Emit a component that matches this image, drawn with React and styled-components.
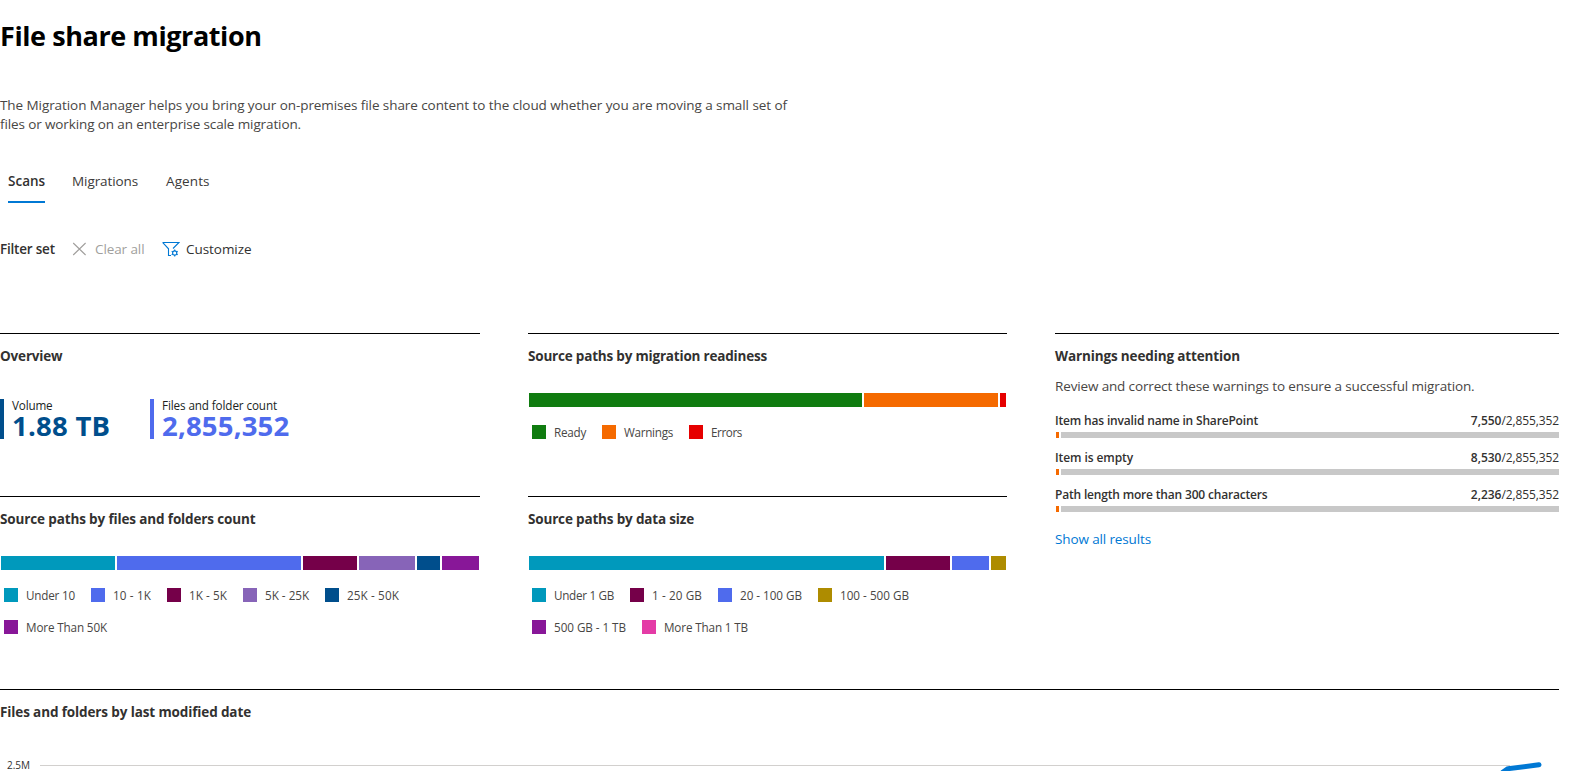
import React from "react";
import styled, { createGlobalStyle } from "styled-components";

const GlobalStyle = createGlobalStyle`
  * { box-sizing: border-box; }
  html, body { margin: 0; background: #fff; overflow: hidden; }
  body { font-family: "Open Sans", sans-serif; color: #323130; font-size: 13.5px; }
  h1, h2, p { margin: 0; }
`;

const Page = styled.main`
  width: 1582px;
  height: 771px;
  overflow: hidden;
  padding-top: 16px;
`;

/* Single-line text with its own tracking */
const Text = styled.span`
  display: inline-block;
  white-space: nowrap;
  letter-spacing: ${(p) => p.$track || 0}px;
`;

const Title = styled.h1`
  font-size: 27px;
  line-height: 40px;
  font-weight: 700;
  color: #000;
`;

const Description = styled.p`
  display: flex;
  flex-direction: column;
  align-items: flex-start;
  margin-top: 40px;
  line-height: 19px;
  color: #484644;
`;

const Tabs = styled.nav`
  display: flex;
  gap: 27px;
  margin-top: 25px;
  padding-left: 8px;
`;

const Tab = styled.div`
  width: ${(p) => p.$width}px;
  height: 44px;
  line-height: 44px;
  font-weight: ${(p) => (p.$active ? 600 : 400)};
  color: ${(p) => (p.$active ? "#323130" : "#3b3a39")};
  box-shadow: ${(p) => (p.$active ? "inset 0 -2px #0078d4" : "none")};
`;

const FilterBar = styled.div`
  display: flex;
  align-items: center;
  height: 40px;
  margin-top: 26px;
  line-height: 40px;
`;

const FilterTitle = styled.div`
  width: 72px;
  font-weight: 600;
`;

const Command = styled.div`
  display: flex;
  align-items: center;
  width: ${(p) => p.$width}px;
  color: ${(p) => (p.$disabled ? "#a19f9d" : "#323130")};
  svg { flex: none; margin-right: ${(p) => p.$gap}px; }
`;

const Grid = styled.div`
  display: grid;
  grid-template-columns: 480px 479px 504px;
  grid-template-rows: 163px 193px;
  column-gap: 48px;
  margin-top: 64px;
`;

const Panel = styled.section`
  border-top: 1px solid #000;
  padding-top: 12px;
  grid-row: ${(p) => (p.$tall ? "span 2" : "auto")};
`;

const Heading = styled.h2`
  font-size: 13.5px;
  line-height: 20px;
  font-weight: 700;
`;

const Kpis = styled.div`
  display: flex;
  margin-top: 33px;
`;

const Kpi = styled.div`
  display: flex;
  flex-direction: column;
  align-items: flex-start;
  width: 150px;
  height: 40px;
  padding-left: 8px;
  border-left: 4px solid ${(p) => p.$color};
`;

const KpiLabel = styled.div`
  font-size: 11.7px;
  line-height: 13px;
  color: #201f1e;
`;

const KpiValue = styled.div`
  font-size: 27.5px;
  line-height: 27px;
  font-weight: 700;
  color: ${(p) => p.$color};
`;

const StackBar = styled.div`
  display: flex;
  gap: 2px;
  height: 14px;
  margin: 27px 1px 0;
`;

const Segment = styled.div`
  background: ${(p) => p.$color};
  flex: ${(p) => p.$size} 1 0;
`;

const Legend = styled.div`
  display: flex;
  flex-wrap: wrap;
  gap: 18px 16px;
  margin-top: 18px;
  padding-left: 4px;
`;

const LegendItem = styled.div`
  display: flex;
  align-items: center;
  gap: 8px;
  height: 14px;
  font-size: 11.7px;
  line-height: 16px;
  color: #484644;
`;

const Swatch = styled.span`
  width: 14px;
  height: 14px;
  background: ${(p) => p.$color};
`;

const LegendText = styled.span`
  width: ${(p) => p.$width}px;
`;

const Review = styled.p`
  margin-top: 10px;
  line-height: 20px;
  color: #484644;
`;

const Warnings = styled.div`
  display: grid;
  gap: 12px;
  margin-top: 17px;
`;

const Warning = styled.div`
  font-size: 12px;
  line-height: 16px;
`;

const WarningRow = styled.div`
  display: flex;
  justify-content: space-between;
`;

const Strong = styled(Text)`
  font-weight: 600;
`;

const Progress = styled.div`
  display: flex;
  gap: 2px;
  height: 6px;
  margin: 3px 0 0 1px;
  &::before { content: ""; width: 3px; background: #f56a00; }
  &::after { content: ""; flex: 1; background: #c8c8c8; }
`;

const Link = styled.a`
  display: block;
  margin-top: 17px;
  line-height: 20px;
  color: #0078d4;
`;

const Timeline = styled(Panel)`
  width: 1559px;
`;

const Chart = styled.div`
  display: flex;
  height: 49px;
  overflow: hidden;
`;

const AxisLabel = styled.div`
  width: 40px;
  padding: 36px 0 0 7px;
  font-size: 10px;
  line-height: 14px;
`;

const panels = {
  ready: {
    title: "Source paths by migration readiness",
    track: -0.194,
    bar: [["#107c10", 333], ["#f56a00", 133.7], ["#e60000", 6.3]],
    legend: [
      ["#107c10", "Ready", 32, -0.256],
      ["#f56a00", "Warnings", 49, -0.283],
      ["#e60000", "Errors", 31, -0.406],
    ],
  },
  count: {
    title: "Source paths by files and folders count",
    track: -0.136,
    bar: [["#0099bc", 114.4], ["#4f6bed", 184.1], ["#750049", 53.7], ["#8764b8", 56.1], ["#004e8c", 23], ["#881798", 37]],
    legend: [
      ["#0099bc", "Under 10", 49, -0.199],
      ["#4f6bed", "10 - 1K", 38, 0.136],
      ["#750049", "1K - 5K", 38, 0.069],
      ["#8764b8", "5K - 25K", 44, 0],
      ["#004e8c", "25K - 50K", 52, 0.123],
      ["#881798", "More Than 50K", 81, -0.135],
    ],
  },
  size: {
    title: "Source paths by data size",
    track: -0.169,
    bar: [["#0099bc", 355], ["#750049", 64.4], ["#4f6bed", 36.8], ["#ae8c00", 14.8]],
    legend: [
      ["#0099bc", "Under 1 GB", 60, -0.298],
      ["#750049", "1 - 20 GB", 50, 0.115],
      ["#4f6bed", "20 - 100 GB", 62, -0.031],
      ["#ae8c00", "100 - 500 GB", 69, 0],
      ["#881798", "500 GB - 1 TB", 72, -0.052],
      ["#e43ba6", "More Than 1 TB", 84, -0.138],
    ],
  },
};

const warnings = [
  { name: "Item has invalid name in SharePoint", count: "7,550", track: -0.169 },
  { name: "Item is empty", count: "8,530", track: -0.093 },
  { name: "Path length more than 300 characters", count: "2,236", track: -0.179 },
];

function StackPanel({ title, track, bar, legend }) {
  return (
    <Panel>
      <Heading><Text $track={track}>{title}</Text></Heading>
      <StackBar>
        {bar.map(([color, size]) => <Segment key={color} $color={color} $size={size} />)}
      </StackBar>
      <Legend>
        {legend.map(([color, text, width, spacing]) => (
          <LegendItem key={text}>
            <Swatch $color={color} />
            <LegendText $width={width}><Text $track={spacing}>{text}</Text></LegendText>
          </LegendItem>
        ))}
      </Legend>
    </Panel>
  );
}

function ClearIcon() {
  return (
    <svg width="15" height="14" viewBox="0 0 15 14" fill="none" stroke="#a19f9d" strokeWidth="1.1">
      <path d="M1.2 1 13.6 13M13.6 1 1.2 13" />
    </svg>
  );
}

function FilterSettingsIcon() {
  return (
    <svg width="18" height="16" viewBox="0 0 18 16" fill="none" stroke="#0078d4" strokeWidth="1.1">
      <path d="M.5 1.5H17L11 7.5M.8 1.7 6.5 7.8V14.5H9" />
      <circle cx="12.7" cy="12" r="2.1" />
      <path d="M12.7 8.6v1.3M12.7 14.1v1.3M9.7 10.3l1.1.6M14.6 13.1l1.1.6M9.7 13.7l1.1-.6M14.6 10.9l1.1-.6" />
    </svg>
  );
}

export default function App() {
  return (
    <Page>
      <GlobalStyle />
      <Title><Text $track={-0.42}>File share migration</Text></Title>
      <Description>
        <Text $track={-0.073}>The Migration Manager helps you bring your on-premises file share content to the cloud whether you are moving a small set of</Text>
        <Text $track={-0.115}>files or working on an enterprise scale migration.</Text>
      </Description>
      <Tabs>
        <Tab $width={37} $active>Scans</Tab>
        <Tab $width={67}><Text $track={-0.08}>Migrations</Text></Tab>
        <Tab $width={44}><Text $track={0.1}>Agents</Text></Tab>
      </Tabs>
      <FilterBar>
        <FilterTitle><Text $track={-0.21}>Filter set</Text></FilterTitle>
        <Command $width={90} $gap={8} $disabled>
          <ClearIcon />
          <Text $track={-0.1}>Clear all</Text>
        </Command>
        <Command $width={100} $gap={6}>
          <FilterSettingsIcon />
          <Text $track={-0.05}>Customize</Text>
        </Command>
      </FilterBar>
      <Grid>
        <Panel>
          <Heading><Text $track={-0.172}>Overview</Text></Heading>
          <Kpis>
            <Kpi $color="#004e8c">
              <KpiLabel><Text $track={-0.167}>Volume</Text></KpiLabel>
              <KpiValue $color="#004e8c"><Text $track={0.25}>1.88 TB</Text></KpiValue>
            </Kpi>
            <Kpi $color="#4f6bed">
              <KpiLabel><Text $track={-0.115}>Files and folder count</Text></KpiLabel>
              <KpiValue $color="#4f6bed"><Text $track={0.18}>2,855,352</Text></KpiValue>
            </Kpi>
          </Kpis>
        </Panel>
        <StackPanel {...panels.ready} />
        <Panel $tall>
          <Heading><Text $track={-0.134}>Warnings needing attention</Text></Heading>
          <Review><Text $track={-0.141}>Review and correct these warnings to ensure a successful migration.</Text></Review>
          <Warnings>
            {warnings.map(({ name, count, track }) => (
              <Warning key={name}>
                <WarningRow>
                  <Strong $track={track}>{name}</Strong>
                  <span><Strong>{count}</Strong><Text $track={-0.114}>/2,855,352</Text></span>
                </WarningRow>
                <Progress />
              </Warning>
            ))}
          </Warnings>
          <Link><Text $track={-0.129}>Show all results</Text></Link>
        </Panel>
        <StackPanel {...panels.count} />
        <StackPanel {...panels.size} />
      </Grid>
      <Timeline>
        <Heading><Text $track={-0.122}>Files and folders by last modified date</Text></Heading>
        <Chart>
          <AxisLabel>2.5M</AxisLabel>
          <svg width="1519" height="49" viewBox="0 0 1519 49" fill="none">
            <path d="M0 43.5H1470" stroke="#d2d0ce" />
            <path d="M1463 50 1468 46.7 1499 42.8" stroke="#0078d4" strokeWidth="5" strokeLinecap="round" strokeLinejoin="round" />
          </svg>
        </Chart>
      </Timeline>
    </Page>
  );
}
